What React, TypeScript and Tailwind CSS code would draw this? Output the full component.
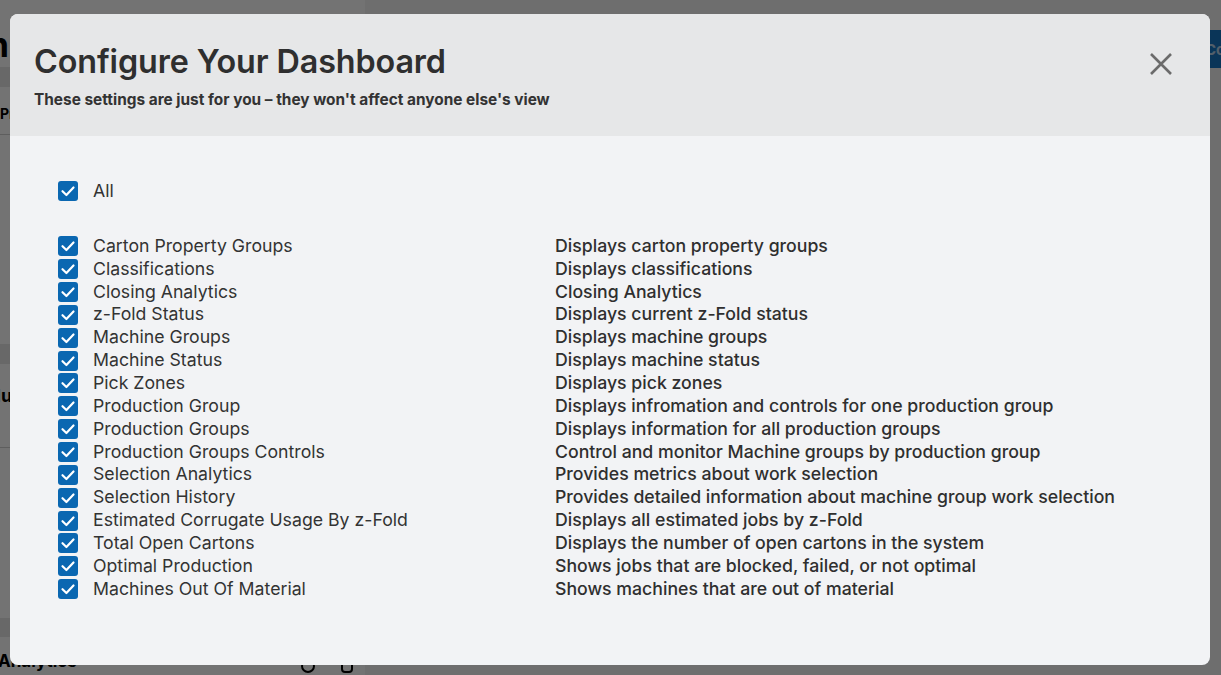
import React from "react";

const widgets: [string, string][] = [
  ["Carton Property Groups", "Displays carton property groups"],
  ["Classifications", "Displays classifications"],
  ["Closing Analytics", "Closing Analytics"],
  ["z-Fold Status", "Displays current z-Fold status"],
  ["Machine Groups", "Displays machine groups"],
  ["Machine Status", "Displays machine status"],
  ["Pick Zones", "Displays pick zones"],
  ["Production Group", "Displays infromation and controls for one production group"],
  ["Production Groups", "Displays information for all production groups"],
  ["Production Groups Controls", "Control and monitor Machine groups by production group"],
  ["Selection Analytics", "Provides metrics about work selection"],
  ["Selection History", "Provides detailed information about machine group work selection"],
  ["Estimated Corrugate Usage By z-Fold", "Displays all estimated jobs by z-Fold"],
  ["Total Open Cartons", "Displays the number of open cartons in the system"],
  ["Optimal Production", "Shows jobs that are blocked, failed, or not optimal"],
  ["Machines Out Of Material", "Shows machines that are out of material"],
];

function Check() {
  return (
    <span className="flex h-[20px] w-[20px] shrink-0 items-center justify-center rounded-[3px] bg-[#0a67b1]">
      <svg viewBox="0 0 20 20" className="h-[20px] w-[20px]" fill="none">
        <path d="M4.5 10.2 8.4 14 15.5 6.5" stroke="#fff" strokeWidth="2.2" strokeLinecap="round" strokeLinejoin="round" />
      </svg>
    </span>
  );
}

function BackgroundPage() {
  return (
    <div className="flex h-full w-full">
      {/* left widget column, mostly hidden by the dialog */}
      <div className="flex w-[365px] flex-col bg-[#f7f7f7]">
        <div className="h-[67px] bg-white pt-[28px]">
          <div className="-ml-[300px] w-[309px] text-right text-[34px] font-bold leading-none text-black">Production</div>
        </div>
        <div className="h-[20px] bg-[#e6e6e6]" />
        <div className="h-[48px] border-b border-[#d0d0d0] bg-white pt-[16px]">
          <div className="text-[14px] font-bold text-black">Pr</div>
        </div>
        <div className="h-[210px] bg-white" />
        <div className="h-[20px] bg-[#e6e6e6]" />
        <div className="h-[85px] border-b border-[#d0d0d0] bg-white pt-[18px]">
          <div className="-ml-[40px] text-[18px] font-bold text-black">Produco</div>
        </div>
        <div className="h-[170px] bg-white" />
        <div className="h-[20px] bg-[#e6e6e6]" />
        <div className="flex items-end justify-between bg-white pr-[12px] pt-[12px]">
          <div className="-ml-[2px] text-[17px] font-bold text-black">Analytics</div>
          <div className="flex gap-[26px] pb-[2px]">
            <span className="h-[14px] w-[14px] rounded-full border-2 border-black" />
            <span className="h-[14px] w-[12px] rounded-sm border-2 border-black" />
          </div>
        </div>
      </div>
      <div className="flex flex-1 justify-end bg-[#f4f4f4] pt-[30px]">
        <div className="h-[38px] w-[60px] bg-[#1775c4] pl-[44px] pt-[9px] text-[15px] font-bold text-white/70">Co</div>
      </div>
    </div>
  );
}

export default function App() {
  return (
    <div className="relative h-[675px] w-[1221px] overflow-hidden font-['Inter',sans-serif]">
      <BackgroundPage />
      <div className="absolute inset-0 bg-black/55" />

      <div className="absolute left-[10px] top-[14px] flex h-[651px] w-[1200px] flex-col overflow-hidden rounded-[8px] bg-[#f2f3f5]">
        <div className="flex h-[122px] shrink-0 items-start justify-between bg-[#e6e7e8] pl-[24px] pr-[37px] pt-[29px]">
          <div>
            <h1 className="text-[32.3px] font-semibold leading-[38px] tracking-[-0.1px] text-[#2f2f2f]">Configure Your Dashboard</h1>
            <p className="mt-[10px] text-[15.4px] font-bold leading-[18px] text-[#333]">
              These settings are just for you – they won't affect anyone else's view
            </p>
          </div>
          <button className="mt-[9px] flex h-[24px] w-[24px] items-center justify-center">
            <svg viewBox="0 0 24 24" className="h-[24px] w-[24px]" fill="none">
              <path d="M2 2 22 22M22 2 2 22" stroke="#6b6b6b" strokeWidth="2.6" />
            </svg>
          </button>
        </div>

        <div className="flex flex-col pl-[48px] pt-[44px] text-[17.7px] leading-[22.87px] text-[#333]">
          <label className="flex items-center gap-[15px]">
            <Check />
            <span>All</span>
          </label>

          <div className="mt-[32px] flex flex-col">
            {widgets.map(([name, desc]) => (
              <div key={name} className="grid h-[22.87px] grid-cols-[497px_1fr] items-center">
                <label className="flex items-center gap-[15px]">
                  <Check />
                  <span>{name}</span>
                </label>
                <span className="text-[17.7px] font-medium text-[#2f2f2f]">{desc}</span>
              </div>
            ))}
          </div>
        </div>
      </div>
    </div>
  );
}
